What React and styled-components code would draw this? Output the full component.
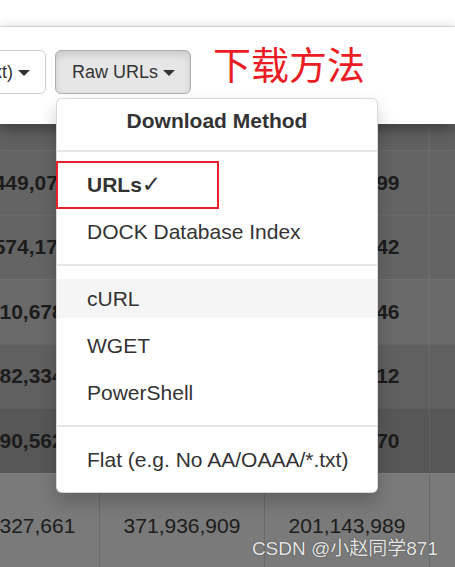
import React from "react";
import styled, { createGlobalStyle } from "styled-components";

const Global = createGlobalStyle`
  html, body { margin: 0; padding: 0; background: #fff; }
  body {
    width: 455px; height: 567px; overflow: hidden;
    font-family: "Liberation Sans", Arial, sans-serif;
    color: #333;
  }
  * { box-sizing: border-box; }
`;

const Page = styled.div`
  position: relative;
  width: 455px;
  height: 567px;
  overflow: hidden;
`;

const TopStrip = styled.div`
  height: 27px;
  border-bottom: 1px solid #e3e3e3;
  background: #fff;
`;

const Toolbar = styled.div`
  position: relative;
  z-index: 2;
  height: 97px;
  padding-top: 23px;
  display: flex;
  align-items: flex-start;
  background: #fff;
  box-shadow: 0 5px 14px rgba(0, 0, 0, 0.4);
`;

const LeftSlot = styled.div`
  width: 46px;
  display: flex;
  justify-content: flex-end;
  overflow: hidden;
  flex-shrink: 0;
`;

const Button = styled.div`
  flex-shrink: 0;
  height: 44px;
  display: flex;
  align-items: center;
  gap: 5px;
  padding: 0 15px 0 16px;
  font-size: 18px;
  color: #333;
  white-space: nowrap;
  border: 1px solid ${(p) => (p.$active ? "#adadad" : "#cccccc")};
  border-radius: 6px;
  background: ${(p) => (p.$active ? "#e6e6e6" : "#fff")};
  box-shadow: ${(p) => (p.$active ? "inset 0 4px 7px rgba(0,0,0,0.125)" : "none")};
`;

const Caret = styled.span`
  width: 0;
  height: 0;
  border-top: 6px solid #333;
  border-left: 6px solid transparent;
  border-right: 6px solid transparent;
  margin-top: 1px;
`;

const Dropdown = styled.div`
  position: relative;
  margin-left: 9px;
`;

const Menu = styled.div`
  position: absolute;
  left: 1px;
  top: calc(100% + 4px);
  width: 322px;
  padding: 7px 0 9px;
  background: #fff;
  border: 1px solid rgba(0, 0, 0, 0.15);
  border-radius: 6px;
  box-shadow: 0 9px 18px rgba(0, 0, 0, 0.2);
  z-index: 5;
`;

const MenuHeader = styled.div`
  text-align: center;
  font-weight: bold;
  font-size: 21px;
  line-height: 30px;
  color: #333;
`;

const Divider = styled.div`
  height: 2px;
  background: #e5e5e5;
  margin: ${(p) => (p.$top ? "14px 0 9px" : "9px 0")};
`;

const Item = styled.div`
  padding: 4px 0;
`;

const ItemLink = styled.div`
  height: 39px;
  padding: 4.5px 30px;
  line-height: 30px;
  font-size: 21px;
  white-space: nowrap;
  color: #333;
  font-weight: ${(p) => (p.$bold ? "bold" : "normal")};
  background: ${(p) => (p.$hover ? "#f5f5f5" : "transparent")};
`;

const Check = styled.span`
  font-family: "DejaVu Sans", sans-serif;
  font-weight: normal;
  font-size: 23px;
  line-height: 1;
`;

const Marked = styled.div`
  position: relative;
`;

const RedBox = styled.div`
  position: absolute;
  left: -1px;
  top: 0;
  width: 163px;
  height: 48px;
  border: 2px solid #e8202a;
  pointer-events: none;
`;

const Annotation = styled.div`
  margin-left: 22px;
  margin-top: -12px;
  font-family: "Noto Sans CJK SC", "Noto Sans", sans-serif;
  font-size: 38px;
  line-height: 50px;
  color: #ec1c24;
  white-space: nowrap;
`;

const Table = styled.div`
  margin-left: -65px;
  display: grid;
  grid-template-columns: repeat(4, 165px);
`;

const Cell = styled.div`
  height: ${(p) => p.$h}px;
  display: flex;
  align-items: center;
  justify-content: center;
  font-size: 21px;
  font-weight: ${(p) => (p.$bold ? "bold" : "normal")};
  color: #1c1c1c;
  background: ${(p) => p.$bg};
  border-right: 1px solid ${(p) => p.$line};
  border-top: 1px solid rgba(255, 255, 255, 0.04);
  white-space: nowrap;
  overflow: hidden;
`;

const Watermark = styled.div`
  position: absolute;
  right: 17px;
  bottom: 7px;
  font-family: "Liberation Sans", "Noto Sans CJK SC", sans-serif;
  font-size: 19px;
  color: #e6e6e6;
  text-shadow: 0 0 1px #444, 0 0 1px #444;
  z-index: 6;
`;

const rows = [
  { h: 26, bg: "#616161", bold: true, vals: ["", "", "", ""] },
  { h: 64.5, bg: "#646464", bold: true, vals: ["12,449,078", "", "98,765,499", ""] },
  { h: 64.5, bg: "#646464", bold: true, vals: ["12,574,173", "", "88,432,142", ""] },
  { h: 64.5, bg: "#6a6a6a", bold: true, vals: ["1,210,678", "", "77,541,246", ""] },
  { h: 64.5, bg: "#606060", bold: true, vals: ["1,482,334", "", "66,210,312", ""] },
  { h: 64.5, bg: "#575757", bold: true, vals: ["1,390,562", "", "55,318,670", ""] },
  { h: 106, bg: "#7a7a7a", bold: false, vals: ["123,327,661", "371,936,909", "201,143,989", ""] },
];

export default function App() {
  return (
    <Page>
      <Global />
      <TopStrip />
      <Toolbar>
        <LeftSlot>
          <Button>
            Flat (*.txt)
            <Caret />
          </Button>
        </LeftSlot>
        <Dropdown>
          <Button $active>
            Raw URLs
            <Caret />
          </Button>
          <Menu>
            <MenuHeader>Download Method</MenuHeader>
            <Divider $top />
            <Marked>
              <Item>
                <ItemLink $bold>
                  URLs<Check>✓</Check>
                </ItemLink>
              </Item>
              <RedBox />
            </Marked>
            <Item>
              <ItemLink>DOCK Database Index</ItemLink>
            </Item>
            <Divider />
            <Item>
              <ItemLink $hover>cURL</ItemLink>
            </Item>
            <Item>
              <ItemLink>WGET</ItemLink>
            </Item>
            <Item>
              <ItemLink>PowerShell</ItemLink>
            </Item>
            <Divider />
            <Item>
              <ItemLink>Flat (e.g. No AA/OAAA/*.txt)</ItemLink>
            </Item>
          </Menu>
        </Dropdown>
        <Annotation>下载方法</Annotation>
      </Toolbar>
      <Table>
        {rows.map((r, i) =>
          r.vals.map((v, j) => (
            <Cell
              key={`${i}-${j}`}
              $h={r.h}
              $bg={r.bg}
              $bold={r.bold}
              $line={r.bold ? "rgba(255,255,255,0.05)" : "#6a6a6a"}
            >
              {v}
            </Cell>
          ))
        )}
      </Table>
      <Watermark>CSDN @小赵同学871</Watermark>
    </Page>
  );
}
